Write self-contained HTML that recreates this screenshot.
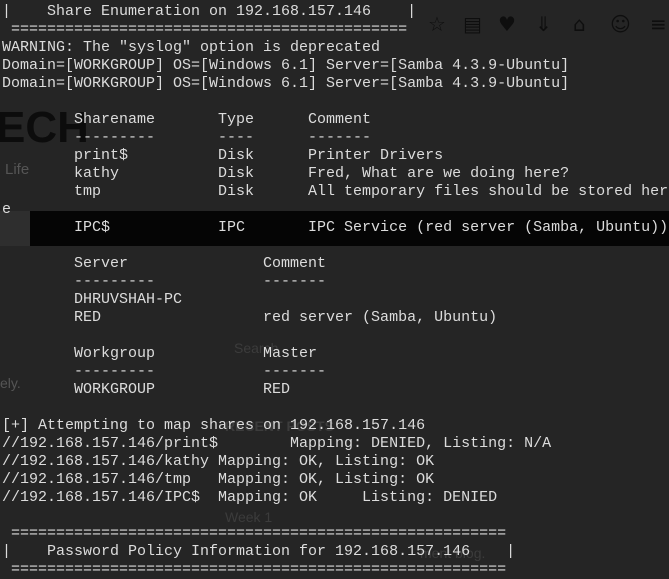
<!DOCTYPE html>
<html><head><meta charset="utf-8"><style>
html,body{margin:0;padding:0;width:669px;height:577px;overflow:hidden;background:#252525;}
.g{position:absolute;font-family:"Liberation Sans",sans-serif;color:#3a3a3a;}
.band{position:absolute;left:30px;top:211px;width:639px;height:35px;background:#050505;}
.lb{position:absolute;left:0;top:211px;width:30px;height:35px;background:#2e2e2e;}
.ic{position:absolute;top:12px;font-size:20px;color:#0e0e0e;font-family:"DejaVu Sans",sans-serif;}
pre{position:absolute;left:2px;top:3px;margin:0;font-family:"Liberation Mono",monospace;font-size:15px;line-height:18px;color:#dcdcdc;white-space:pre;}
</style></head><body>
<div class="lb"></div>
<div class="band"></div>
<div class="g" style="left:-4px;top:103px;font-size:44px;font-weight:bold;color:#0c0c0c;">ECH</div>
<div class="g" style="left:5px;top:161px;font-size:15px;color:#555;">Life</div>
<div class="g" style="left:0;top:375px;font-size:14px;color:#555;">ely.</div>
<div class="g" style="left:234px;top:340px;font-size:14px;color:#3c3c3c;">Search</div>
<div class="g" style="left:225px;top:418px;font-size:14px;font-weight:bold;color:#3c3c3c;">RECENT POSTS</div>
<div class="g" style="left:225px;top:509px;font-size:14px;color:#3c3c3c;">Week 1</div>
<div class="g" style="left:420px;top:545px;font-size:14px;color:#3c3c3c;">ment blog.</div>
<span class="ic" style="left:428px">☆</span>
<span class="ic" style="left:463px">▤</span>
<span class="ic" style="left:498px">♥</span>
<span class="ic" style="left:535px">⇓</span>
<span class="ic" style="left:573px">⌂</span>
<span class="ic" style="left:610px">☺</span>
<span class="ic" style="left:650px">≡</span>
<pre>|    Share Enumeration on 192.168.157.146    |
 ============================================
WARNING: The "syslog" option is deprecated
Domain=[WORKGROUP] OS=[Windows 6.1] Server=[Samba 4.3.9-Ubuntu]
Domain=[WORKGROUP] OS=[Windows 6.1] Server=[Samba 4.3.9-Ubuntu]

        Sharename       Type      Comment
        ---------       ----      -------
        print$          Disk      Printer Drivers
        kathy           Disk      Fred, What are we doing here?
        tmp             Disk      All temporary files should be stored her
e
        IPC$            IPC       IPC Service (red server (Samba, Ubuntu))

        Server               Comment
        ---------            -------
        DHRUVSHAH-PC
        RED                  red server (Samba, Ubuntu)

        Workgroup            Master
        ---------            -------
        WORKGROUP            RED

[+] Attempting to map shares on 192.168.157.146
//192.168.157.146/print$        Mapping: DENIED, Listing: N/A
//192.168.157.146/kathy Mapping: OK, Listing: OK
//192.168.157.146/tmp   Mapping: OK, Listing: OK
//192.168.157.146/IPC$  Mapping: OK     Listing: DENIED

 =======================================================
|    Password Policy Information for 192.168.157.146    |
 =======================================================</pre>
</body></html>
